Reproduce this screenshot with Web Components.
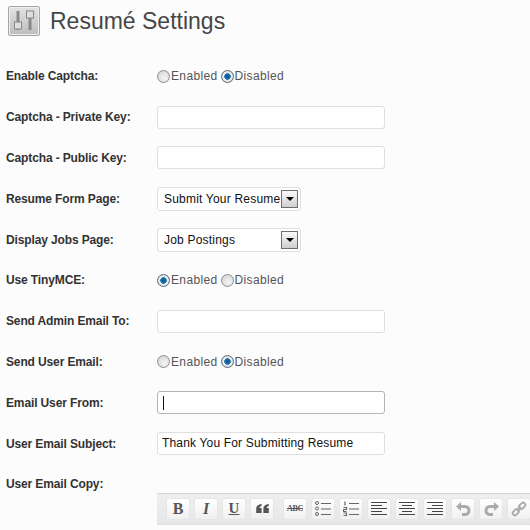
<!DOCTYPE html>
<html>
<head>
<meta charset="utf-8">
<title>Resumé Settings</title>
<style>
  html, body { margin: 0; height: 530px; overflow: hidden; background: #fcfcfc; }
  body { font: 12px "Liberation Sans", Arial, sans-serif; color: #333; }
</style>
</head>
<body>
<resume-page>
  <page-heading>Resumé Settings</page-heading>
  <settings-row label="Enable Captcha:"><radio-group value="Disabled"></radio-group></settings-row>
  <settings-row label="Captcha - Private Key:"><text-field></text-field></settings-row>
  <settings-row label="Captcha - Public Key:"><text-field></text-field></settings-row>
  <settings-row label="Resume Form Page:"><select-field>Submit Your Resume</select-field></settings-row>
  <settings-row label="Display Jobs Page:"><select-field>Job Postings</select-field></settings-row>
  <settings-row label="Use TinyMCE:"><radio-group value="Enabled"></radio-group></settings-row>
  <settings-row label="Send Admin Email To:"><text-field></text-field></settings-row>
  <settings-row label="Send User Email:"><radio-group value="Disabled"></radio-group></settings-row>
  <settings-row label="Email User From:"><text-field focused></text-field></settings-row>
  <settings-row label="User Email Subject:"><text-field value="Thank You For Submitting Resume"></text-field></settings-row>
  <settings-row label="User Email Copy:"></settings-row>
  <editor-toolbar>
    <tool-button><b style="font:bold 16px 'Liberation Serif',serif">B</b></tool-button>
    <tool-button><i style="font:italic bold 16px 'Liberation Serif',serif">I</i></tool-button>
    <tool-button><u style="font:bold 15px 'Liberation Serif',serif">U</u></tool-button>
    <tool-button><svg width="13" height="9" viewBox="0 0 14 10" fill="#555"><path d="M6 0v2C4.600 2.500 3.800 3.300 3.600 4.400H6V10H0V5C0 2.200 2.200.4 6 0zM14 0v2c-1.400.5-2.200 1.300-2.400 2.400H14V10H8V5c0-2.800 2.200-4.600 6-5z"/></svg></tool-button>
    <tool-button gap><s style="font:bold 8px 'Liberation Serif',serif;letter-spacing:-.3px">ABC</s></tool-button>
    <tool-button><svg width="16" height="15" viewBox="0 0 16 15" fill="none" stroke="#666"><circle cx="2" cy="2" r="1.500"/><circle cx="2" cy="7.500" r="1.500"/><circle cx="2" cy="13" r="1.500"/><path d="M6 2.500h10M6 8h10M6 13.500h10"/></svg></tool-button>
    <tool-button><svg width="16" height="15" viewBox="0 0 16 15" fill="none" stroke="#666"><path d="M2 0.500v4M0.500 6.500h3v2h-3v2h3M0.500 12h3v2.500h-3" stroke-width="1.200"/><path d="M6 2.500h10M6 8h10M6 13.500h10"/></svg></tool-button>
    <tool-button><svg width="16" height="13" viewBox="0 0 16 13" stroke="#444"><path d="M0 .5h16M0 3.500h11M0 6.500h16M0 9.500h11M0 12.500h16"/></svg></tool-button>
    <tool-button><svg width="16" height="13" viewBox="0 0 16 13" stroke="#444"><path d="M0 .5h16M3 3.500h10M0 6.500h16M3 9.500h10M0 12.500h16"/></svg></tool-button>
    <tool-button><svg width="16" height="13" viewBox="0 0 16 13" stroke="#444"><path d="M0 .5h16M5 3.500h11M0 6.500h16M5 9.500h11M0 12.500h16"/></svg></tool-button>
    <tool-button><svg width="15" height="14" viewBox="0 0 15 14" fill="none"><path d="M4 4.500h5a4 4 0 0 1 0 8H6" stroke="#aaa" stroke-width="3"/><path d="M0 4.500 5 0v9z" fill="#aaa"/></svg></tool-button>
    <tool-button><svg width="15" height="14" viewBox="0 0 15 14" fill="none"><path d="M11 4.500H6a4 4 0 0 0 0 8h3" stroke="#aaa" stroke-width="3"/><path d="M15 4.500 10 0v9z" fill="#aaa"/></svg></tool-button>
    <tool-button><svg width="16" height="16" viewBox="0 0 16 16" fill="none" stroke="#aaa" stroke-width="1.800"><rect x="-3.500" y="-2.200" width="7" height="4.400" rx="2.200" transform="translate(11.200 4.800) rotate(-45)"/><rect x="-3.500" y="-2.200" width="7" height="4.400" rx="2.200" transform="translate(4.800 11.200) rotate(-45)"/><path d="M6 10l4-4"/></svg></tool-button>
  </editor-toolbar>
</resume-page>

<script>
function define(name, css, html) {
  customElements.define(name, class extends HTMLElement {
    connectedCallback() {
      if (this.shadowRoot) return;
      this.attachShadow({ mode: 'open' });
      this.shadowRoot.innerHTML = `<style>${css}</style>${typeof html === 'function' ? html(this) : html}`;
    }
  });
}

define('resume-page', `
  :host { display: block; width: 530px; height: 530px; overflow: hidden; padding-left: 6px; box-sizing: border-box; }
`, `<slot></slot>`);

define('page-heading', `
  :host { display: flex; align-items: center; gap: 10px; height: 42px; padding: 0 0 14px 2px; font-size: 23px; color: #464646; }
  .icon { width: 32px; height: 30px; box-sizing: border-box; border: 1px solid #a5a5a5; border-radius: 2px; background: linear-gradient(#e2e2e2, #bdbdbd); box-shadow: inset 0 0 0 1px #eee; display: block; flex: none; }
`, `
  <svg class="icon" viewBox="0 0 30 28">
    <path d="M9 4v19M21 4v19" stroke="#888" stroke-width="3"/>
    <rect x="5.500" y="15" width="7" height="7" fill="#ddd" stroke="#888"/>
    <rect x="17.500" y="4" width="7" height="7" fill="#ddd" stroke="#888"/>
  </svg>
  <span><slot></slot></span>
`);

define('settings-row', `
  :host { display: grid; grid-template-columns: 151px 1fr; align-items: center; height: 40.800px; }
  label { font-weight: bold; font-size: 12px; color: #333; letter-spacing: -.13px; }
  .field { display: flex; align-items: center; }
`, el => `<label>${el.getAttribute('label')}</label><div class="field"><slot></slot></div>`);

define('radio-group', `
  :host { display: inline-flex; align-items: center; color: #555; font-size: 12px; letter-spacing: .35px; }
  .radio { width: 13px; height: 13px; box-sizing: border-box; border-radius: 50%; border: 1px solid #8d8d8d; background: radial-gradient(circle at 60% 65%, #f4f4f4, #cfcfcf); margin-right: 1px; }
  .radio.on { background: radial-gradient(circle, #0a4f8a 0, #1f78b8 3px, #f0f0f0 3.600px, #c8c8c8 100%); border-color: #5a6a78; }
  span.txt { margin-right: 3px; }
`, el => ['Enabled', 'Disabled'].map(v =>
  `<span class="radio ${el.getAttribute('value') === v ? 'on' : ''}"></span><span class="txt">${v}</span>`).join(''));

define('text-field', `
  :host { display: block; width: 228px; height: 23px; box-sizing: border-box; border: 1px solid #dfdfdf; border-radius: 3px; background: #fff; padding: 0 4px; font-size: 12px; line-height: 21px; color: #111; letter-spacing: .17px; }
  :host([focused]) { border-color: #b4b4b4; }
  .caret { display: inline-block; width: 1px; height: 14px; background: #111; vertical-align: middle; margin-left: 1px; }
`, el => el.hasAttribute('focused') ? `<span class="caret"></span>` : (el.getAttribute('value') || ''));

define('select-field', `
  :host { display: flex; align-items: center; width: 144px; height: 24px; box-sizing: border-box; border: 1px solid #dfdfdf; border-radius: 3px; background: #fff; padding: 0 2px 0 6px; font-size: 12px; color: #111; letter-spacing: .2px; }
  .text { flex: 1; overflow: hidden; white-space: nowrap; min-width: 0; }
  .arrow { flex: none; width: 17px; height: 18px; box-sizing: border-box; border: 1px solid #6e6e6e; background: linear-gradient(#fafafa, #cfcfcf); display: flex; align-items: center; justify-content: center; }
  .arrow i { border: 4px solid transparent; border-top: 4px solid #000; border-bottom: 0; }
`, `<span class="text"><slot></slot></span><span class="arrow"><i></i></span>`);

define('editor-toolbar', `
  :host { display: flex; gap: 4px; box-sizing: border-box; width: 400px; height: 32px; margin: -12px 0 0 151px; padding: 4px 0 0 9px; background: linear-gradient(#efefef, #e6e6e6); border-top: 1px solid #d4d4d4; border-bottom: 1px solid #dfdfdf; }
`, `<slot></slot>`);

define('tool-button', `
  :host { display: flex; align-items: center; justify-content: center; flex: none; width: 24px; height: 22px; box-sizing: border-box; border: 1px solid #e6e6e6; border-radius: 3px; background: linear-gradient(#fff, #f0f0f0); color: #555; }
  :host([gap]) { margin-left: 5px; }
`, `<slot></slot>`);
</script>
</body>
</html>
